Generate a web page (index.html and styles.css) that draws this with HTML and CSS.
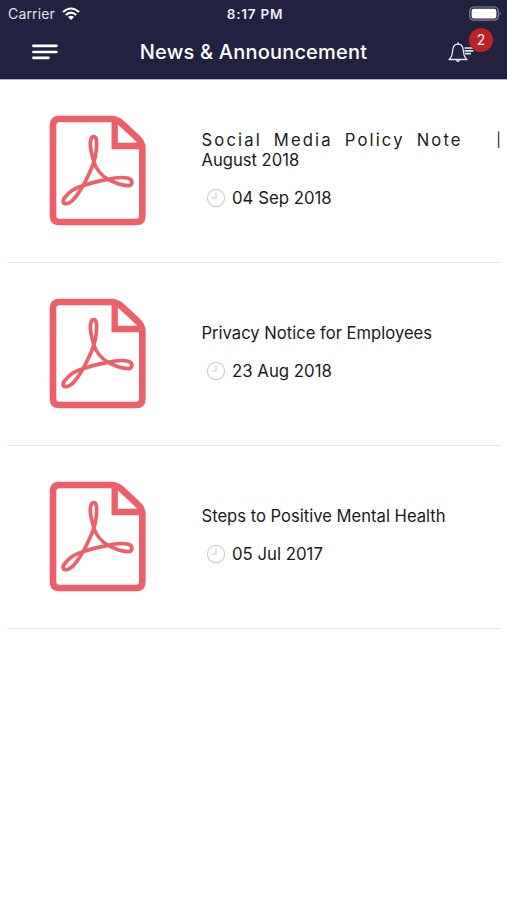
FILE: index.html
```html
<!DOCTYPE html>
<html lang="en">
<head>
<meta charset="utf-8">
<title>News &amp; Announcement</title>
<link rel="stylesheet" href="styles.css">
</head>
<body>
<svg class="defs" width="0" height="0" aria-hidden="true">
  <symbol id="pdf" viewBox="0 0 360 390">
    <g fill="none" stroke="#ef5f6a" stroke-linejoin="round">
      <path stroke-width="20" d="M58 42H215C228 42 236 47 246 56L292 99C303 109 307 118 307 130V332Q307 351 288 351H58Q39 351 39 332V61Q39 42 58 42Z"/>
      <path stroke-width="19" stroke-linejoin="miter" d="M224 44V123H306"/>
      <path stroke-width="11" d="M162 172C153 142 150 128 151 114C152 88 170 88 170 114C170 146 163 171 154 191C145 211 137 229 128 244C112 271 97 294 80 296C67 297 66 287 75 277C87 261 106 248 128 242C155 233 178 228 203 223C224 218 250 216 265 220C280 224 279 243 264 242C246 241 224 233 204 223C184 212 168 190 162 172Z"/>
    </g>
  </symbol>
  <symbol id="clock" viewBox="0 0 20 20">
    <g fill="none" stroke="#cfcfcf" stroke-width="1.2"><circle cx="10" cy="10" r="8.6"/><path d="M10 4.5V10H5.5"/></g>
  </symbol>
</svg>
<header class="header">
  <div class="status">
    <div class="carrier"><span>Carrier</span>
      <svg width="18" height="14" viewBox="0 0 18 14"><g fill="none" stroke="#fff" stroke-width="2.1"><path d="M1 5Q9-2 17 5"/><path d="M3.8 8Q9 3.4 14.2 8"/></g><path fill="#fff" d="M6 10Q9 7.6 12 10L9 13Z"/></svg>
    </div>
    <div class="time">8:17 PM</div>
    <svg class="battery" width="33" height="16" viewBox="0 0 33 16"><rect x=".8" y="1" width="28.4" height="13.2" rx="4" fill="none" stroke="#85869b" stroke-width="1.2"/><rect x="2.6" y="2.8" width="24.8" height="9.6" rx="2.2" fill="#fff"/><path d="M30.6 5.4Q32.6 7.6 30.6 9.8Z" fill="#85869b"/></svg>
  </div>
  <div class="nav">
    <svg class="menu" width="28" height="18" viewBox="0 0 28 18"><path fill="none" stroke="#fff" stroke-width="2.7" stroke-linecap="round" d="M2.4 2.8H25.4M2.4 9H25.4M2.4 14.8H17.4"/></svg>
    <h1>News &amp; Announcement</h1>
    <div class="bell">
      <svg width="28" height="22" viewBox="0 0 28 22"><g fill="none" stroke="#e5e6ef" stroke-width="1.3" stroke-linejoin="round" stroke-linecap="round"><path d="M1 18.5C4.8 15.5 4.2 12 4.9 8C5.5 4.6 7.3 3.2 10 3.2S14.5 4.6 15.1 8C15.8 12 15.2 15.5 19 18.5Z"/><path d="M10 1.6V3M8.7 19.4Q10 21.4 11.3 19.4"/><path stroke-width="1.7" stroke-linecap="butt" d="M16.5 7H26M16.5 9.8H25.4M17 12.6H23"/></g></svg>
      <span class="badge">2</span>
    </div>
  </div>
</header>
<main class="list">
  <article class="item">
    <svg class="doc"><use href="#pdf"/></svg>
    <div class="text">
      <h2 class="split"><span class="line"><span>Social</span><span>Media</span><span>Policy</span><span>Note</span><span class="bar">|</span></span><span class="second">August 2018</span></h2>
      <p><svg class="clock"><use href="#clock"/></svg><span>04 Sep 2018</span></p>
    </div>
  </article>
  <article class="item">
    <svg class="doc"><use href="#pdf"/></svg>
    <div class="text">
      <h2>Privacy Notice for Employees</h2>
      <p><svg class="clock"><use href="#clock"/></svg><span>23 Aug 2018</span></p>
    </div>
  </article>
  <article class="item">
    <svg class="doc"><use href="#pdf"/></svg>
    <div class="text">
      <h2>Steps to Positive Mental Health</h2>
      <p><svg class="clock"><use href="#clock"/></svg><span>05 Jul 2017</span></p>
    </div>
  </article>
</main>
</body>
</html>
```
FILE: styles.css
```css
* { box-sizing: border-box; }
body { margin: 0; height: 900px; overflow: hidden; background: #fff; color: #1a1a1a; font-family: Inter, "Liberation Sans", sans-serif; }
svg { display: block; flex: none; }
.defs { display: none; }
h1, h2, p { margin: 0; font-weight: 400; white-space: nowrap; }
.header { height: 79px; background: #20223f; color: #fff; box-shadow: 0 1px 0 #b4b5c0; }
.status { display: grid; grid-template-columns: 1fr auto 1fr; height: 27px; padding: 0 5px 0 8px; align-items: center; }
.carrier { display: flex; align-items: center; gap: 7px; font-size: 14px; letter-spacing: .15px; color: #e1e2e8; }
.time { font-size: 13.5px; font-weight: 600; letter-spacing: .8px; color: #eeeef4; }
.battery { justify-self: end; }
.nav { display: grid; grid-template-columns: 1fr auto 1fr; height: 49px; padding: 0 31px; align-items: center; }
h1 { font-size: 20px; font-weight: 500; letter-spacing: .2px; }
.bell { position: relative; justify-self: end; }
.badge { position: absolute; left: 21px; top: -13px; width: 24px; height: 24px; border-radius: 50%; background: #bd2025; color: #fff; font-size: 14px; line-height: 24px; text-align: center; }
.list { padding: 1px 6px 0 7px; }
.item { display: flex; height: 183px; border-bottom: 1px solid #e5e5e5; padding-left: 33px; }
.doc { width: 120px; height: 130px; margin-top: 25px; }
.text { flex: 1; padding: 0 0 4px 41.5px; align-self: center; display: flex; flex-direction: column; gap: 18px; }
h2 { font-size: 16.6px; line-height: 20px; }
.line { display: flex; letter-spacing: 2.15px; gap: 12px; }
.bar { margin-left: auto; letter-spacing: 0; font-size: 14px; }
.second { display: block; }
.item p { display: flex; align-items: center; gap: 6px; padding-left: 4.5px; font-size: 16.8px; line-height: 20px; }
.clock { width: 20px; height: 20px; }
```
